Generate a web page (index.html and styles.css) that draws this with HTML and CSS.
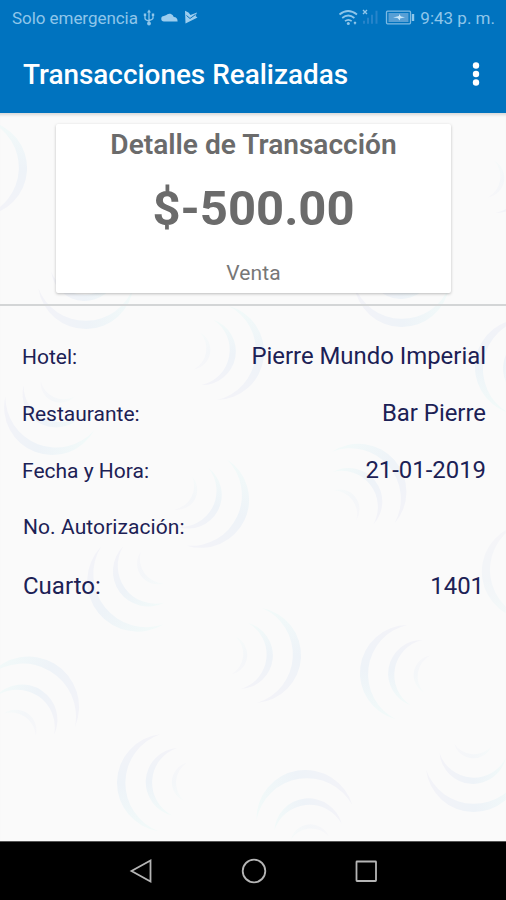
FILE: index.html
```html
<!DOCTYPE html>
<html lang="es">
<head>
<meta charset="utf-8">
<title>Transacciones Realizadas</title>
<link rel="stylesheet" href="styles.css">
</head>
<body>
<div class="screen">
  <header class="header">
    <div class="status">
      <span class="carrier">Solo emergencia</span>
      <svg class="status-left" width="60" height="20" viewBox="0 0 60 20" fill="none" stroke="#8fc6ea" stroke-width="1.3">
        <path d="M9 3v12M5 7v3.500q0 1.500 4 2.500M13 7v3q0 1.500-4 2.500"/>
        <path d="M7 4.500L9 1.500l2 3zM3.800 5.500h2.400v2.500h-2.400zM11.800 5.500h2.400v2.500h-2.400z" fill="#8fc6ea" stroke="none"/><circle cx="9" cy="15.500" r="1.900" fill="#8fc6ea" stroke="none"/>
        <path d="M24 13.500a2.700 2.700 0 0 1 0-5.500q1-.5 2-.7a4.500 4.500 0 0 1 7.800 1.800q3.800.2 3.800 4.400z" fill="#9ccdee" stroke="none"/>
        <path d="M45 2.800l3.500 1.600 2 2.600 6.500-2.600-1.500 3.500 2 1.600L45.500 15.500z" fill="#9ccdee" stroke="none"/><path d="M46.500 7.500l3.500 3 5.500-4" stroke="#0873bf" stroke-width="1"/>
      </svg>
      <svg class="status-right" width="78" height="20" viewBox="0 0 78 20" fill="none" stroke="#8fc6ea" stroke-width="1.700">
        <path d="M1.500 6.500q8.500-7 17.500 0M4.200 10q6-5 12.200 0M7 13.200q3.300-2.700 6.700 0"/><circle cx="10.300" cy="15.500" r="1.500" fill="#8fc6ea" stroke="none"/><path d="M16 14l2 2m0-2l-2 2" stroke-width="1.200"/>
        <path d="M25 2l4 4m0-4l-4 4" stroke-width="1.400"/>
        <path d="M26 15.800v-3M30 15.800v-6M34 15.800v-9M38.500 15.800v-13" stroke="#2784ca" stroke-width="2"/>
        <rect x="48.500" y="3.200" width="24" height="12.600" rx="1" stroke="#7dbae4" stroke-width="1.300"/><rect x="50.500" y="5" width="20" height="9" fill="#579fd5" stroke="none"/><path d="M75 6v7" stroke-width="2.400"/><path d="M55 9.500l6-1.500v-2l2 2.500 4 .7-5 1.300v2l-2.500-2.500z" fill="#c9e8fb" stroke="none"/>
      </svg>
      <span class="clock">9:43 p. m.</span>
    </div>
    <div class="toolbar">
      <h1 class="title">Transacciones Realizadas</h1>
      <svg width="8" height="26" viewBox="0 0 8 26" fill="#fff"><circle cx="4" cy="4.500" r="3.200"/><circle cx="4" cy="13" r="3.200"/><circle cx="4" cy="21.500" r="3.200"/></svg>
    </div>
  </header>

  <main class="content">
    <svg class="waves" width="506" height="728" viewBox="0 113 506 728" aria-hidden="true">
      <defs>
        <linearGradient id="tint" x1="0" y1="0" x2="0" y2="1"><stop offset="0" stop-color="#f2faf9"/><stop offset=".5" stop-color="#eef3f8"/><stop offset="1" stop-color="#f3f3f8"/></linearGradient>
        <g id="wave" fill="url(#tint)">
          <path d="M8-47A48 48 0 0 1 3 48A50.600 50.600 0 0 0 8-47z"/>
          <path d="M-6-32A33.600 33.600 0 0 1-13 34A36 36 0 0 0-6-32z"/>
          <path d="M-18-18A19.700 19.700 0 0 1-22 19A23.500 23.500 0 0 0-18-18z" opacity=".5"/>
        </g>
      </defs>
      <use href="#wave" transform="translate(-20 168)"/>
      <use href="#wave" transform="translate(86 282) rotate(86)"/>
      <use href="#wave" transform="translate(402 280) rotate(88)"/>
      <use href="#wave" transform="translate(217 352) rotate(4)"/>
      <use href="#wave" transform="translate(522 367) rotate(188)"/>
      <use href="#wave" transform="translate(511 180) rotate(4)"/>
      <use href="#wave" transform="translate(52 408) rotate(108)"/>
      <use href="#wave" transform="translate(202 500) rotate(22)"/>
      <use href="#wave" transform="translate(359 491) rotate(-44)"/>
      <use href="#wave" transform="translate(137 582) rotate(138) scale(1.050)"/>
      <use href="#wave" transform="translate(529 572) rotate(168)" opacity=".6"/>
      <use href="#wave" transform="translate(254 655)"/>
      <use href="#wave" transform="translate(407 673) rotate(184)"/>
      <use href="#wave" transform="translate(29 706) rotate(-62) scale(1.050)"/>
      <use href="#wave" transform="translate(165 783) rotate(178) scale(1.020)"/>
      <use href="#wave" transform="translate(305 818) rotate(-102) scale(1.020)"/>
      <use href="#wave" transform="translate(474 765) rotate(88)"/>
    </svg>
    <section class="summary">
      <div class="card">
        <h2 class="card-title">Detalle de Transacción</h2>
        <p class="amount">$-500.00</p>
        <p class="kind">Venta</p>
      </div>
    </section>
    <dl class="details">
      <div class="row"><dt>Hotel:</dt><dd>Pierre Mundo Imperial</dd></div>
      <div class="row"><dt>Restaurante:</dt><dd>Bar Pierre</dd></div>
      <div class="row"><dt>Fecha y Hora:</dt><dd>21-01-2019</dd></div>
      <div class="row inset auth"><dt>No. Autorización:</dt><dd></dd></div>
      <div class="row inset room"><dt>Cuarto:</dt><dd>1401</dd></div>
    </dl>
  </main>

  <nav class="navbar">
    <svg width="26" height="26" viewBox="0 0 26 26"><path d="M21.500 2.500v21L2.500 13z"/></svg>
    <svg width="26" height="26" viewBox="0 0 26 26"><circle cx="13" cy="13" r="11.300"/></svg>
    <svg width="26" height="26" viewBox="0 0 26 26"><rect x="3.500" y="3.500" width="19.500" height="19.500" rx=".5"/></svg>
  </nav>
</div>
</body>
</html>
```
FILE: styles.css
```css
* { box-sizing: border-box; margin: 0; padding: 0; }
body { font-family: Roboto, "Liberation Sans", sans-serif; background: #000; }
.screen { width: 506px; height: 900px; display: flex; flex-direction: column; overflow: hidden; }
.header { height: 113px; flex: none; background: #0073bf; color: #fff; }
.status { height: 36px; display: flex; align-items: center; padding: 0 11px 0 12px; color: #8fc6ea; font-size: 17px; white-space: nowrap; }
.carrier { letter-spacing: -.05px; }
.status-left { margin-left: 2px; }
.status-right { margin-left: auto; margin-right: 4px; }
.toolbar { height: 76px; display: flex; align-items: center; justify-content: space-between; padding: 0 26px 0 23px; }
.title { font-size: 27.9px; font-weight: 500; line-height: 36px; white-space: nowrap; padding-top: 1px; }
.content { position: relative; height: 728px; flex: none; background: #fafafa; box-shadow: inset 0 4px 3px -2px #d8d8d8; }
.waves { position: absolute; inset: 0; }
.summary { position: relative; height: 193px; padding: 11px 55px 0 56px; border-bottom: 2px solid #d3d5d6; }
.card { height: 169px; background: #fff; border-radius: 2px; box-shadow: 0 1px 3px rgba(0,0,0,.25); color: #6b6b6b; text-align: center; display: flex; flex-direction: column; white-space: nowrap; }
.card-title { font-size: 28.1px; font-weight: 600; line-height: 32px; margin-top: 5px; }
.amount { font-size: 49px; font-weight: 700; line-height: 58px; margin-top: 19px; }
.kind { font-size: 21px; line-height: 25px; margin-top: 23px; letter-spacing: .1px; color: #777; }
.details { position: relative; padding: 22px 20px 0 22px; color: #1c2155; }
.row { height: 57px; display: flex; align-items: baseline; justify-content: space-between; white-space: nowrap; line-height: 57px; }
dt { font-size: 21px; }
dd { font-size: 23.9px; }
.inset { padding: 0 2px 0 1px; }
.auth { letter-spacing: .08px; }
.room { margin-top: 2px; }
.room dt { font-size: 24px; }
.navbar { height: 59px; flex: none; background: #000; border-top: 1px solid #555; display: flex; justify-content: center; align-items: center; gap: 86px; padding-left: 2px; }
.navbar svg { fill: none; stroke: #b5b5b5; stroke-width: 1.800; }
```
